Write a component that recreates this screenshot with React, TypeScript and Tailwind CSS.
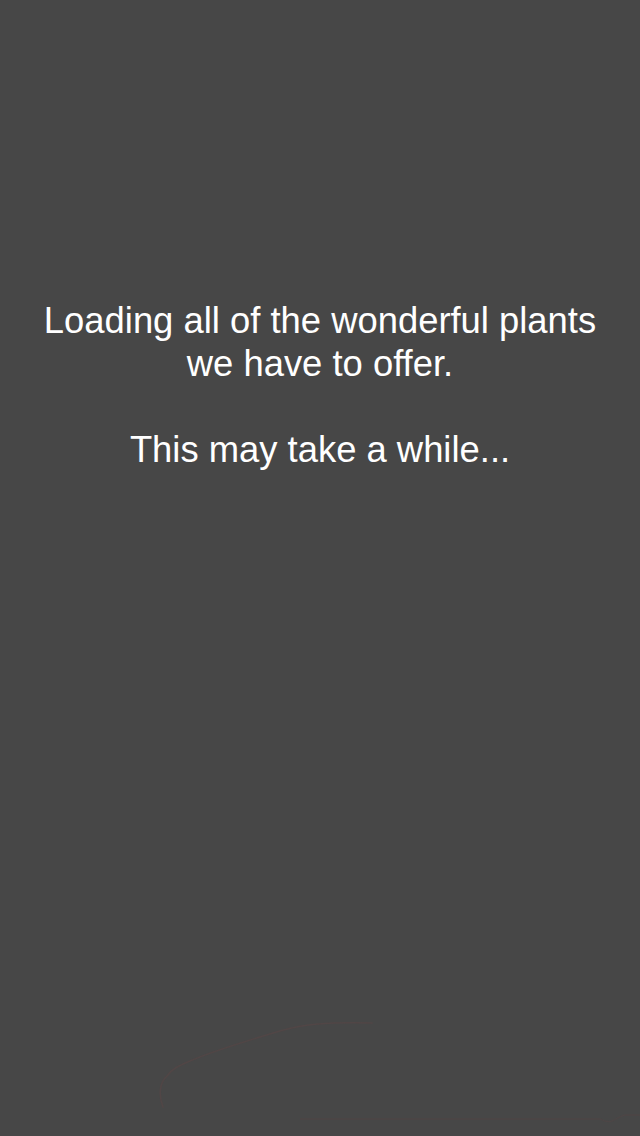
export default function App() {
  return (
    <main className="relative h-[1136px] w-full overflow-hidden bg-[#474747] text-white">
      <div className="flex flex-col items-center pt-[299px] text-center font-['Liberation_Sans',Arial,sans-serif] text-[36.4px] leading-[43px]">
        <p>Loading all of the wonderful plants</p>
        <p>we have to offer.</p>
        <p>&nbsp;</p>
        <p>This may take a while...</p>
      </div>

      {/* faint leftover stroke near the bottom */}
      <svg
        className="pointer-events-none absolute left-0 top-0"
        width="640"
        height="1136"
        viewBox="0 0 640 1136"
        fill="none"
      >
        <path
          d="M163 1107 C158 1094 160 1082 167 1076 C172 1069 178 1066 190 1061 C215 1050 250 1040 280 1031 C305 1024 325 1022 372 1023"
          stroke="#514646"
          strokeWidth="1.6"
          strokeLinecap="round"
        />
        <path
          d="M300 1119 L600 1119 C604 1121 608 1123 612 1121 C617 1119 620 1116 625 1115 L640 1115"
          stroke="#4d4646"
          strokeWidth="1.3"
        />
      </svg>
    </main>
  );
}
